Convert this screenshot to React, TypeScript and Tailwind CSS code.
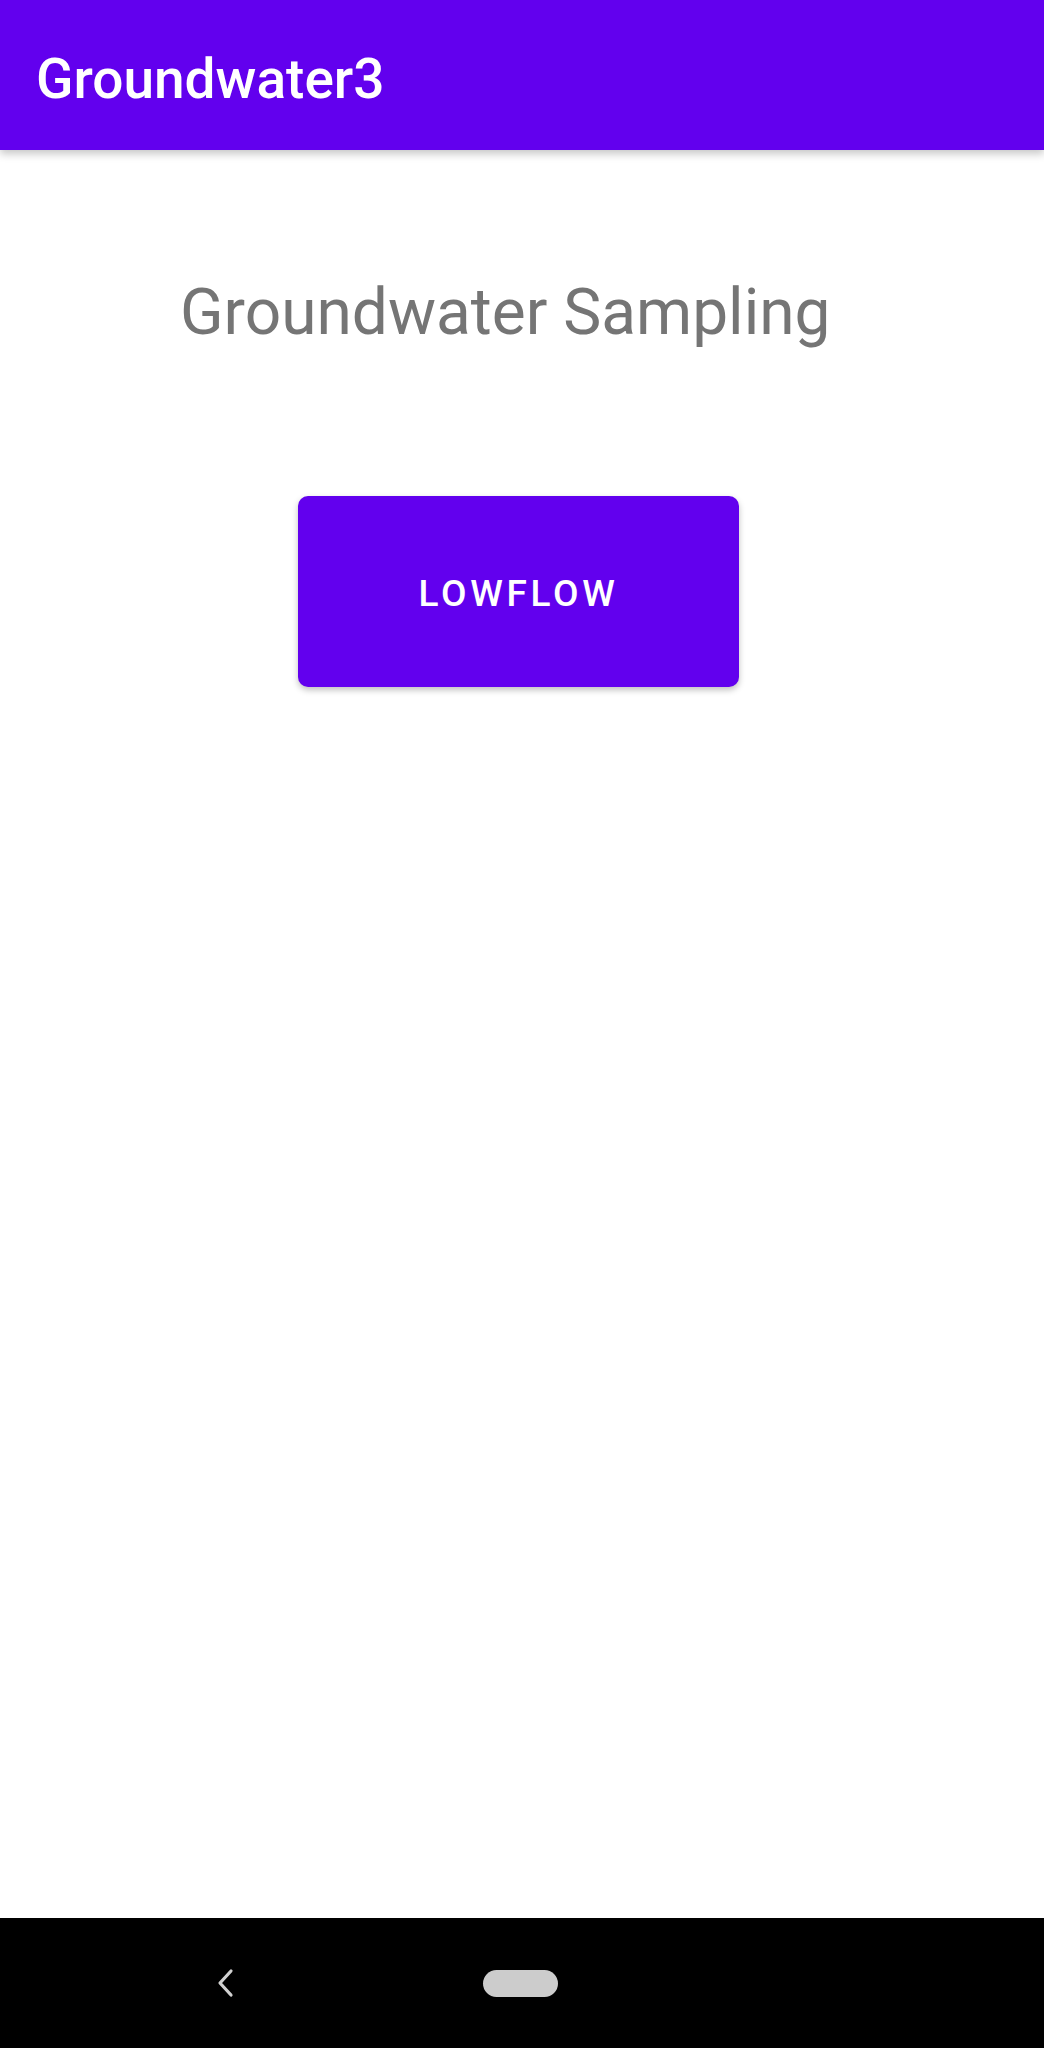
export default function App() {
  return (
    <div
      className="flex h-[2048px] w-[1044px] flex-col bg-white"
      style={{ fontFamily: "Roboto, 'Noto Sans', sans-serif" }}
    >
      <header className="relative z-10 flex h-[150px] items-center bg-[#6200ee] pl-[36px] pt-[8px] shadow-[0_4px_8px_rgba(0,0,0,0.22)]">
        <h1 className="text-[55px] font-medium leading-none text-white">Groundwater3</h1>
      </header>

      <main className="flex flex-1 flex-col">
        <div className="pl-[180px] pt-[125px]">
          <h2 className="text-[64px] font-normal leading-[75px] text-[#757575]">Groundwater Sampling</h2>
        </div>
        <div className="pl-[298px] pt-[146px]">
          <button className="flex h-[191px] w-[441px] items-center justify-center rounded-[10px] bg-[#6200ee] pt-[4px] text-[37px] font-medium tracking-[0.1em] text-white shadow-[0_3px_6px_rgba(0,0,0,0.25)]">
            LOWFLOW
          </button>
        </div>
      </main>

      <nav className="relative flex h-[130px] items-center bg-black">
        <svg className="absolute left-[214px] top-[50px]" width="24" height="30" viewBox="0 0 24 30">
          <path d="M17 3 L6 15 L17 27" fill="none" stroke="#d0d0d0" strokeWidth="3.2" strokeLinecap="round" strokeLinejoin="round" />
        </svg>
        <div className="absolute left-[483px] top-[52px] h-[27px] w-[75px] rounded-full bg-[#cccccc]" />
      </nav>
    </div>
  );
}
